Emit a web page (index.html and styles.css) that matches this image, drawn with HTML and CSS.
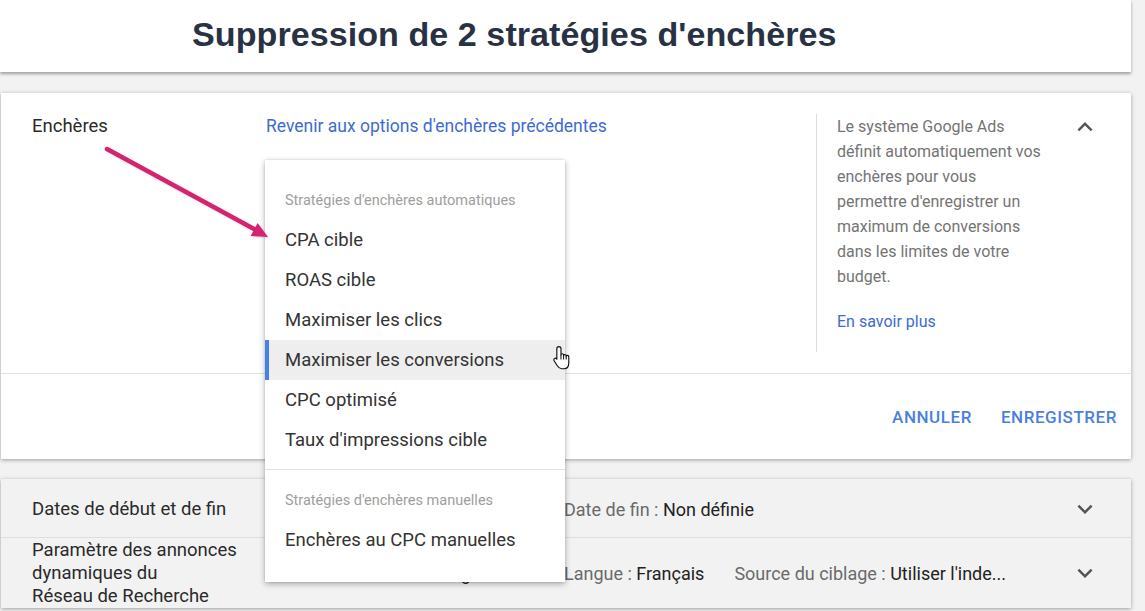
FILE: index.html
```html
<!DOCTYPE html>
<html lang="fr">
<head>
<meta charset="utf-8">
<title>Suppression de 2 stratégies d'enchères</title>
<link rel="stylesheet" href="styles.css">
</head>
<body>
<header class="title-bar">
  <h1 class="title">Suppression de 2 stratégies d'enchères</h1>
</header>
<main class="content">
  <section class="card bidding">
    <div class="bidding-body">
      <div class="row-label">Enchères</div>
      <div class="bidding-main">
        <a class="link" href="#">Revenir aux options d'enchères précédentes</a>
      </div>
      <aside class="help">
        <p class="help-text">Le système Google Ads définit automatiquement vos enchères pour vous permettre d'enregistrer un maximum de conversions dans les limites de votre budget.</p>
        <a class="link help-link" href="#">En savoir plus</a>
      </aside>
      <div class="chevron-cell">
        <svg class="chevron" viewBox="0 0 24 24" width="30" height="30"><path d="M7.4 15.4 12 10.8l4.6 4.6L18 14l-6-6-6 6z" fill="#555"/></svg>
      </div>
    </div>
    <div class="bidding-actions">
      <button class="btn">ANNULER</button>
      <button class="btn">ENREGISTRER</button>
    </div>

    <div class="menu">
      <div class="menu-group">
        <div class="menu-header">Stratégies d'enchères automatiques</div>
        <div class="menu-item">CPA cible</div>
        <div class="menu-item">ROAS cible</div>
        <div class="menu-item">Maximiser les clics</div>
        <div class="menu-item active">Maximiser les conversions</div>
        <div class="menu-item">CPC optimisé</div>
        <div class="menu-item">Taux d'impressions cible</div>
      </div>
      <div class="menu-group">
        <div class="menu-header">Stratégies d'enchères manuelles</div>
        <div class="menu-item">Enchères au CPC manuelles</div>
      </div>
    </div>

    <svg class="cursor" viewBox="0 0 18 25" width="19" height="26">
      <path d="M6.5 1.5C7.6 1.5 8.5 2.3 8.5 3.5V9.6C8.5 8.9 9 8.4 9.7 8.4 10.4 8.4 11 8.9 11 9.7V10.4C11 9.7 11.5 9.2 12.2 9.2 12.9 9.2 13.5 9.7 13.5 10.5V11.2C13.5 10.5 14 10 14.7 10 15.4 10 16 10.5 16 11.3V17C16 20.2 14.5 22.8 11.5 22.8H9.2C7.2 22.8 6.1 21.8 5.1 20.2L1.9 15.1C1.4 14.3 1.6 13.3 2.4 12.9 3.1 12.5 3.9 12.8 4.4 13.5L4.5 13.7V3.5C4.5 2.3 5.4 1.5 6.5 1.5Z" fill="#fff" stroke="#111" stroke-width="1.1" stroke-linejoin="round"/>
      <path d="M8.5 9.6V14M11 10.4V14M13.5 11.2V14" stroke="#111" stroke-width="1" fill="none"/>
    </svg>
  </section>

  <section class="card settings">
    <div class="settings-row">
      <div class="row-label">Dates de début et de fin</div>
      <div class="row-values">
        <span class="pair pair-lead"><span class="key">Date de début : </span><span class="val">1 mars 2020</span></span>
        <span class="pair"><span class="key">Date de fin : </span><span class="val">Non définie</span></span>
      </div>
      <div class="chevron-cell">
        <svg class="chevron" viewBox="0 0 24 24" width="30" height="30"><path d="M7.4 8.6 12 13.2l4.6-4.6L18 10l-6 6-6-6z" fill="#555"/></svg>
      </div>
    </div>
    <div class="settings-row tall">
      <div class="row-label multi">Paramètre des annonces<br>dynamiques du<br>Réseau de Recherche</div>
      <div class="row-values">
        <span class="pair pair-lead"><span class="key">Domaine : </span><span class="val">www.mon-blog.fr</span></span>
        <span class="pair"><span class="key">Langue : </span><span class="val">Français</span></span>
        <span class="pair"><span class="key">Source du ciblage : </span><span class="val">Utiliser l'inde...</span></span>
      </div>
      <div class="chevron-cell">
        <svg class="chevron" viewBox="0 0 24 24" width="30" height="30"><path d="M7.4 8.6 12 13.2l4.6-4.6L18 10l-6 6-6-6z" fill="#555"/></svg>
      </div>
    </div>
  </section>

  <svg class="annotation-arrow" viewBox="0 0 180 110" width="180" height="110">
    <line x1="7" y1="9" x2="155" y2="89.5" stroke="#d6236f" stroke-width="4.5" stroke-linecap="round"/>
    <polygon points="168,97 150.6,96 157.6,83" fill="#d6236f"/>
  </svg>
</main>
</body>
</html>
```

FILE: styles.css
```css
* { box-sizing: border-box; }

html, body {
  margin: 0;
  padding: 0;
}

body {
  width: 1145px;
  height: 611px;
  overflow: hidden;
  background: #f2f2f2;
  font-family: Roboto, "Liberation Sans", sans-serif;
  color: #2a2a2a;
}

.title-bar {
  width: 1131px;
  height: 72px;
  background: #fff;
  box-shadow: 0 2px 3px rgba(0, 0, 0, 0.35);
  padding-left: 192px;
  display: flex;
  align-items: center;
}

.title {
  margin: 0 0 4px;
  font-family: "Liberation Sans", Arial, sans-serif;
  font-weight: bold;
  font-size: 34.1px;
  color: #283244;
  letter-spacing: 0.05px;
}

.content {
  position: relative;
  padding: 21px 0 0 1px;
}

.card {
  width: 1130px;
  box-shadow: 0 1px 4px rgba(0, 0, 0, 0.35);
}

.bidding {
  position: relative;
  background: #fff;
  z-index: 1;
}

.bidding-body {
  display: flex;
  height: 281px;
  padding: 21px 0 21px 31px;
  border-bottom: 1px solid #e0e0e0;
}

.row-label {
  width: 234px;
  flex: none;
  font-size: 18.5px;
  line-height: 25px;
  color: #2a2a2a;
}

.bidding-main {
  width: 550px;
  flex: none;
  font-size: 17.5px;
  line-height: 25px;
}

.link {
  color: #3d6bd1;
  text-decoration: none;
}

.help {
  width: 240px;
  flex: none;
  border-left: 1px solid #dcdcdc;
  padding-left: 20px;
  font-size: 16px;
  line-height: 25px;
  color: #747474;
}

.help-text {
  margin: 0;
  width: 212px;
}

.help-link {
  display: block;
  margin-top: 20px;
}

.chevron-cell {
  margin-left: auto;
  width: 30px;
  height: 30px;
  margin-right: 31px;
}

.bidding .chevron-cell {
  margin-top: -2px;
}

.chevron {
  display: block;
}

.bidding-actions {
  height: 85px;
  display: flex;
  justify-content: flex-end;
  align-items: center;
  gap: 29px;
  padding-right: 14px;
}

.btn {
  border: 0;
  background: none;
  padding: 0;
  font-family: Roboto, "Liberation Sans", sans-serif;
  font-weight: 500;
  font-size: 17px;
  letter-spacing: 0.55px;
  color: #4a7fe0;
  cursor: pointer;
}

.menu {
  position: absolute;
  left: 264px;
  top: 67px;
  width: 300px;
  background: #fff;
  padding: 20px 0 22px;
  box-shadow: 0 2px 6px rgba(0, 0, 0, 0.3), 0 0 2px rgba(0, 0, 0, 0.12);
  z-index: 5;
}

.menu-group + .menu-group {
  border-top: 1px solid #e0e0e0;
  margin-top: 9px;
  padding-top: 10px;
}

.menu-header {
  height: 40px;
  display: flex;
  align-items: center;
  padding-left: 20px;
  font-size: 14.5px;
  color: #9e9e9e;
}

.menu-item {
  height: 40px;
  display: flex;
  align-items: center;
  padding-left: 20px;
  font-size: 18.5px;
  color: #333;
}

.menu-item.active {
  background: #eeeeee;
  border-left: 4px solid #4a80e3;
  padding-left: 16px;
}

.cursor {
  position: absolute;
  left: 551px;
  top: 252px;
  z-index: 6;
}

.settings {
  margin-top: 20px;
  background: #f2f2f2;
}

.settings-row {
  display: flex;
  align-items: center;
  height: 59px;
  padding-left: 31px;
  padding-top: 2px;
  border-bottom: 1px solid #dedede;
}

.settings-row.tall {
  height: 70px;
  padding-top: 0;
  border-bottom: 0;
}

.row-label.multi {
  line-height: 23px;
  font-size: 18.5px;
}

.row-values {
  display: flex;
  gap: 30px;
  font-size: 18px;
  white-space: nowrap;
}

.pair-lead {
  min-width: 268px;
}

.key {
  color: #6a6a6a;
}

.val {
  color: #222;
}

.annotation-arrow {
  position: absolute;
  left: 100px;
  top: 68px;
  z-index: 3;
  filter: drop-shadow(1px 1px 1px rgba(0, 0, 0, 0.15));
}
```
